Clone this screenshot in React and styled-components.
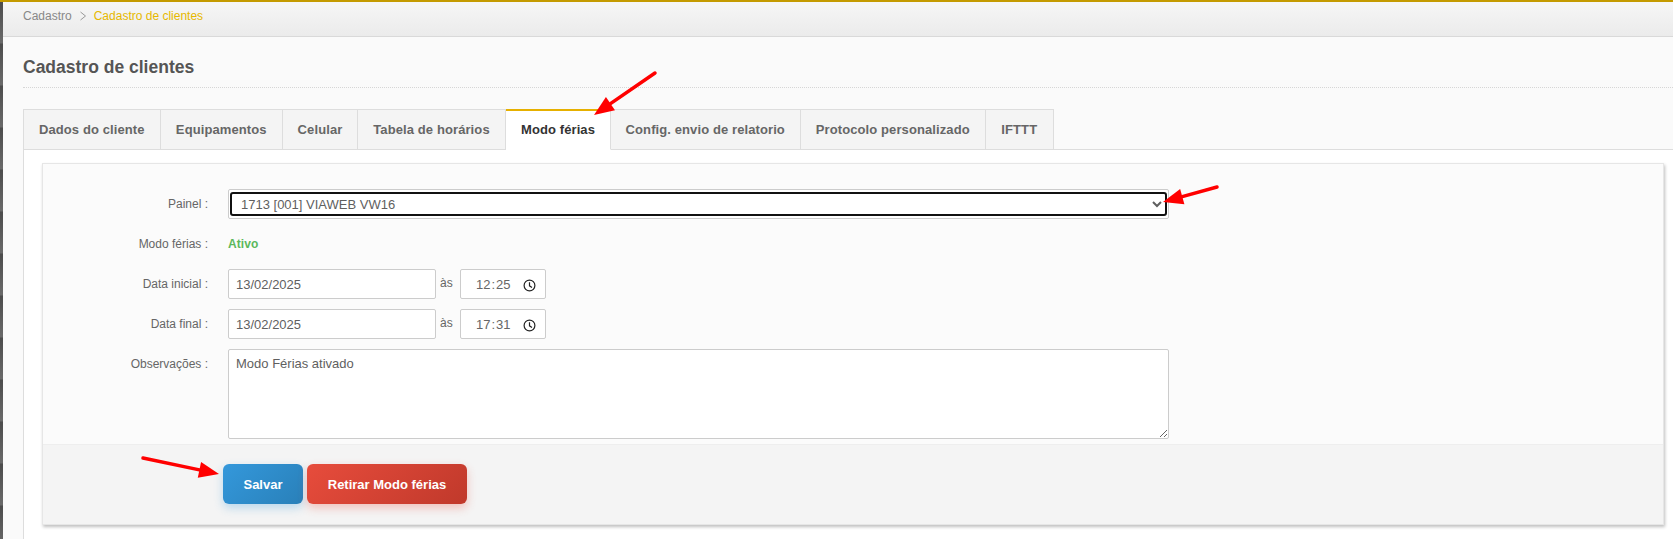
import styled, { createGlobalStyle } from "styled-components";

const tabs = [
    { name: "Dados do cliente", width: 137.5 },
    { name: "Equipamentos", width: 122.5 },
    { name: "Celular", width: 75 },
    { name: "Tabela de horários", width: 148 },
    { name: "Modo férias", width: 105 },
    { name: "Config. envio de relatorio", width: 189.5 },
    { name: "Protocolo personalizado", width: 185.5 },
    { name: "IFTTT", width: 67.5 },
];

const arrows = [
    { from: [655, 73], to: [594, 115] },
    { from: [1217, 187], to: [1163, 202] },
    { from: [143, 458], to: [219, 474] },
];

export default function App() {
    return (
        <>
            <GlobalStyle />
            <Shell>
                <SideStrip />
                <Main>
                    <Breadcrumb>
                        <span>Cadastro</span>
                        <Chevron viewBox="0 0 8 10">
                            <path d="M1.5 1 L6.5 5 L1.5 9" />
                        </Chevron>
                        <Current>Cadastro de clientes</Current>
                    </Breadcrumb>
                    <Content>
                        <Title>Cadastro de clientes</Title>
                        <TabBar>
                            {tabs.map((tab) => (
                                <Tab key={tab.name} $width={tab.width} $active={tab.name === "Modo férias"}>{tab.name}</Tab>
                            ))}
                        </TabBar>
                        <TabPane>
                            <Panel>
                                <Form>
                                    <Row>
                                        <Label>Painel :</Label>
                                        <SelectFrame>
                                            <Select defaultValue="1713">
                                                <option value="1713">1713 [001] VIAWEB VW16</option>
                                            </Select>
                                        </SelectFrame>
                                    </Row>
                                    <Row>
                                        <Label>Modo férias :</Label>
                                        <Status>Ativo</Status>
                                    </Row>
                                    <DateRow label="Data inicial :" date="13/02/2025" hour="12" minute="25" />
                                    <DateRow label="Data final :" date="13/02/2025" hour="17" minute="31" />
                                    <Row>
                                        <Label>Observações :</Label>
                                        <Notes readOnly defaultValue="Modo Férias ativado" />
                                    </Row>
                                </Form>
                                <Actions>
                                    <Button $from="#3498db" $to="#2980b9" $glow="52, 152, 219" $width="80px">Salvar</Button>
                                    <Button $from="#e74c3c" $to="#c0392b" $glow="231, 76, 60" $width="160px">Retirar Modo férias</Button>
                                </Actions>
                            </Panel>
                        </TabPane>
                    </Content>
                </Main>
                <Annotations viewBox="0 0 1673 539">
                    {arrows.map((arrow, index) => (
                        <Arrow from={arrow.from} to={arrow.to} key={index} />
                    ))}
                </Annotations>
            </Shell>
        </>
    );
}

function DateRow(props) {
    const { label, date, hour, minute } = props;

    return (
        <Row>
            <Label>{label}</Label>
            <DateInput readOnly defaultValue={date} />
            <Connector>às</Connector>
            <TimeBox>
                <TimeText>
                    {hour}<TimeColon>:</TimeColon>{minute}
                </TimeText>
                <ClockIcon viewBox="0 0 13 13">
                    <circle cx="6.5" cy="6.5" r="5.4" />
                    <path d="M6.5 3.2 V6.8 L9 8.4" />
                </ClockIcon>
            </TimeBox>
        </Row>
    );
}

function Arrow(props) {
    const { from, to } = props;
    const dx = to[0] - from[0];
    const dy = to[1] - from[1];
    const length = Math.hypot(dx, dy);
    const ux = dx / length;
    const uy = dy / length;
    const baseX = to[0] - ux * 20;
    const baseY = to[1] - uy * 20;
    const head = [
        to,
        [baseX - uy * 8, baseY + ux * 8],
        [baseX + uy * 8, baseY - ux * 8],
    ];

    return (
        <>
            <ArrowLine x1={from[0]} y1={from[1]} x2={baseX} y2={baseY} />
            <polygon points={head.map((point) => point.join(",")).join(" ")} fill="#ff0000" />
        </>
    );
}

const GlobalStyle = createGlobalStyle`
    html, body {
        margin: 0;
        padding: 0;
        background: #fafafa;
    }

    body {
        font-family: "Liberation Sans", Arial, sans-serif;
    }
`;

const Shell = styled.div`
    position: relative;
    display: flex;
    width: 1673px;
    height: 539px;
    overflow: hidden;
    border-top: 2px solid #c49a00;
    box-sizing: border-box;
`;

const SideStrip = styled.div`
    width: 3px;
    flex-shrink: 0;
    background: repeating-linear-gradient(#4c4c4c 0, #6a6a6a 41px, #4c4c4c 42px);
`;

const Main = styled.div`
    flex: 1;
    min-width: 0;
    display: flex;
    flex-direction: column;
`;

const Breadcrumb = styled.div`
    height: 35px;
    flex-shrink: 0;
    box-sizing: border-box;
    display: flex;
    align-items: center;
    gap: 7px;
    padding: 0 0 6px 20px;
    font-size: 12px;
    color: #888888;
    background: linear-gradient(#f6f6f6, #ebebeb);
    border-bottom: 1px solid #d9d9d9;
`;

const Chevron = styled.svg`
    width: 8px;
    height: 10px;

    path {
        fill: none;
        stroke: #999999;
        stroke-width: 1;
    }
`;

const Current = styled.span`
    color: #e6b800;
`;

const Content = styled.div`
    flex: 1;
    padding-left: 20px;
    background: #fafafa;
    display: flex;
    flex-direction: column;
`;

const Title = styled.h1`
    margin: 0 0 21px;
    height: 51px;
    box-sizing: border-box;
    padding-top: 20px;
    font-size: 17.5px;
    line-height: 20px;
    font-weight: 700;
    color: #555555;
    border-bottom: 1px dotted #d6d6d6;
`;

const TabBar = styled.div`
    display: flex;
    height: 41px;
    flex-shrink: 0;
    box-sizing: border-box;
    border-bottom: 1px solid #dddddd;
`;

const Tab = styled.div`
    width: ${(props) => props.$width}px;
    height: 41px;
    box-sizing: border-box;
    padding-bottom: ${(props) => (props.$active ? "1px" : "0")};
    display: flex;
    align-items: center;
    justify-content: center;
    font-size: 13px;
    font-weight: 700;
    letter-spacing: 0.1px;
    white-space: nowrap;
    color: ${(props) => (props.$active ? "#333333" : "#666666")};
    background: ${(props) => (props.$active ? "#ffffff" : "#f4f4f4")};
    border-top: ${(props) => (props.$active ? "2px solid #e6b000" : "1px solid #dddddd")};
    border-right: 1px solid #dddddd;
    border-bottom: ${(props) => (props.$active ? "1px solid #ffffff" : "1px solid #dddddd")};

    &:first-child {
        border-left: 1px solid #dddddd;
    }
`;

const TabPane = styled.div`
    flex: 1;
    background: #ffffff;
    border-left: 1px solid #dddddd;
    padding: 13px 9px 0 18px;
`;

const Panel = styled.div`
    background: #fbfbfb;
    border: 1px solid #e6e6e6;
    box-shadow: 1px 2px 3px rgba(0, 0, 0, 0.25);
`;

const Form = styled.div`
    display: flex;
    flex-direction: column;
    gap: 10px;
    padding: 25px 0 5px;
`;

const Row = styled.div`
    display: flex;
    align-items: flex-start;
    min-height: 30px;
`;

const Label = styled.label`
    width: 165px;
    margin-right: 20px;
    flex-shrink: 0;
    text-align: right;
    font-size: 12px;
    line-height: 30px;
    color: #666666;
`;

const SelectFrame = styled.div`
    width: 941px;
    height: 30px;
    box-sizing: border-box;
    padding: 2px 1px;
    background: #ffffff;
    border: 1px solid #cccccc;
    border-radius: 2px;
`;

const Select = styled.select`
    display: block;
    width: 100%;
    height: 100%;
    box-sizing: border-box;
    padding: 0 5px;
    font-family: "Liberation Sans", Arial, sans-serif;
    font-size: 13px;
    color: #5f5f5f;
    background: #ffffff;
    border: 2px solid #111111;
    border-radius: 3px;
    outline: none;
`;

const Status = styled.span`
    font-size: 12px;
    font-weight: 700;
    letter-spacing: 0.1px;
    line-height: 30px;
    color: #5cb85c;
`;

const DateInput = styled.input`
    width: 208px;
    height: 30px;
    box-sizing: border-box;
    padding: 0 7px;
    font-family: "Liberation Sans", Arial, sans-serif;
    font-size: 13px;
    color: #5f5f5f;
    background: #ffffff;
    border: 1px solid #cccccc;
    border-radius: 2px;
    outline: none;
`;

const Connector = styled.span`
    width: 24px;
    padding-left: 4px;
    box-sizing: border-box;
    font-size: 12px;
    line-height: 28px;
    color: #666666;
`;

const TimeBox = styled.div`
    width: 86px;
    height: 30px;
    box-sizing: border-box;
    padding-left: 15px;
    display: flex;
    align-items: center;
    gap: 12px;
    background: #ffffff;
    border: 1px solid #cccccc;
    border-radius: 2px;
`;

const TimeText = styled.span`
    font-size: 13px;
    color: #666666;
`;

const TimeColon = styled.span`
    margin: 0 1px;
`;

const ClockIcon = styled.svg`
    width: 13px;
    height: 13px;
    margin-top: 2px;

    circle, path {
        fill: none;
        stroke: #222222;
        stroke-width: 1.2;
    }
`;

const Notes = styled.textarea`
    width: 941px;
    height: 90px;
    box-sizing: border-box;
    padding: 6px 7px;
    font-family: "Liberation Sans", Arial, sans-serif;
    font-size: 13px;
    line-height: 15px;
    color: #5f5f5f;
    background: #ffffff;
    border: 1px solid #cccccc;
    border-radius: 2px;
    outline: none;
`;

const Actions = styled.div`
    display: flex;
    gap: 4px;
    height: 80px;
    box-sizing: border-box;
    padding: 19px 0 0 180px;
    background: #f4f4f4;
    border-top: 1px solid #eeeeee;
`;

const Button = styled.button`
    width: ${(props) => props.$width};
    height: 40px;
    padding: 0;
    border: none;
    border-radius: 6px;
    font-family: "Liberation Sans", Arial, sans-serif;
    font-size: 13px;
    font-weight: 700;
    color: #ffffff;
    background: linear-gradient(135deg, ${(props) => props.$from}, ${(props) => props.$to});
    box-shadow: 0 4px 10px rgba(${(props) => props.$glow}, 0.3);
`;

const Annotations = styled.svg`
    position: absolute;
    top: -2px;
    left: 0;
    width: 1673px;
    height: 539px;
    pointer-events: none;
`;

const ArrowLine = styled.line`
    stroke: #ff0000;
    stroke-width: 3.5;
    stroke-linecap: round;
`;
